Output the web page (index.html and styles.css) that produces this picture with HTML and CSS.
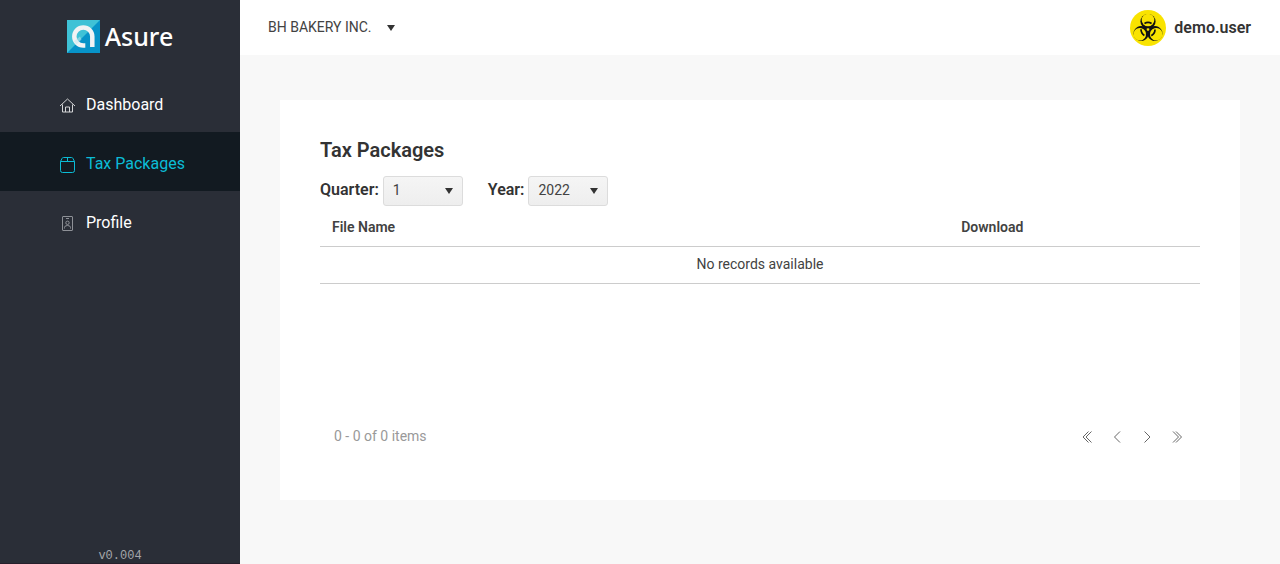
FILE: index.html
```html
<!DOCTYPE html>
<html lang="en">
<head>
<meta charset="utf-8">
<title>Tax Packages</title>
<link rel="stylesheet" href="styles.css">
</head>
<body>
<div class="app">
  <aside class="sidebar">
    <a class="brand" href="#">
      <svg class="brand-mark" viewBox="0 0 33 33" aria-hidden="true">
        <path fill="#0793c8" d="M0 0h33v33H0z"/>
        <path fill="#3fc2d6" d="M0 0h33L0 33z"/>
        <path fill="none" stroke="#f1f3f4" stroke-width="4.500" d="M25.300 27V16.500a9 9 0 1 0-9 9h2"/>
        <path fill="#c5e7ef" d="M7 21l6-4.500 1.500 3-5 5z" opacity=".5"/>
      </svg>
      <span>Asure</span>
    </a>
    <nav class="menu">
      <a class="menu-item" href="#">
        <svg class="icon light" viewBox="0 0 16 16" aria-hidden="true"><path d="M0 8l7.500-7L15 8M2.500 6.500V14h10V6.500M5.500 14V9h4v5"/></svg>
        Dashboard
      </a>
      <a class="menu-item active" href="#" aria-current="page">
        <svg class="icon" viewBox="0 0 16 16" aria-hidden="true"><path d="M.5 4.500h14v9q0 2-2 2h-10q-2 0-2-2zL2 1.500q.4-1 1.500-1h8q1.100 0 1.500 1l1.500 3M7.500.5v4"/></svg>
        Tax Packages
      </a>
      <a class="menu-item" href="#">
        <svg class="icon muted" viewBox="0 0 16 16" aria-hidden="true"><path d="M3 .5h9q.5 0 .5.500v13q0 .5-.5.500H3q-.5 0-.5-.500V1q0-.5.500-.500zM6 2.500h3M4.500 12.500v-1q0-2 3-2t3 2v1"/><circle cx="7.500" cy="6.800" r="1.700"/></svg>
        Profile
      </a>
    </nav>
    <div class="version">v0.004</div>
  </aside>
  <div class="content">
    <header class="topbar">
      <button class="company" type="button">BH BAKERY INC.
        <svg class="caret" viewBox="0 0 8 6" aria-hidden="true"><path d="M0 0h8L4 6z"/></svg>
      </button>
      <a class="user" href="#">
        <svg class="avatar" viewBox="0 0 36 36" aria-hidden="true">
          <defs>
            <mask id="blades" maskUnits="userSpaceOnUse" x="0" y="0" width="36" height="36">
              <g fill="#fff">
                <circle cx="18" cy="11.500" r="7.600"/>
                <circle cx="18" cy="11.500" r="7.600" transform="rotate(120 18 19.500)"/>
                <circle cx="18" cy="11.500" r="7.600" transform="rotate(240 18 19.500)"/>
              </g>
              <circle cx="18" cy="10" r="6.300"/>
              <circle cx="18" cy="10" r="6.300" transform="rotate(120 18 19.500)"/>
              <circle cx="18" cy="10" r="6.300" transform="rotate(240 18 19.500)"/>
              <circle cx="18" cy="19.500" r="1.300"/>
            </mask>
          </defs>
          <circle cx="18" cy="18" r="18" fill="#f9e300"/>
          <path fill="#111" mask="url(#blades)" d="M0 0h36v36H0z"/>
          <circle cx="18" cy="19.500" r="7" fill="none" stroke="#111" stroke-width="1.700" stroke-dasharray="7.400 7.260" transform="rotate(-120.300 18 19.500)"/>
        </svg>
        demo.user
      </a>
    </header>
    <main class="main">
      <section class="card">
        <h1>Tax Packages</h1>
        <div class="filters">
          <div class="field">
            <label for="quarter">Quarter:</label>
            <span class="picker">
              <select id="quarter"><option>1</option><option>2</option><option>3</option><option>4</option></select>
              <svg class="caret" viewBox="0 0 8 6" aria-hidden="true"><path d="M0 0h8L4 6z"/></svg>
            </span>
          </div>
          <div class="field">
            <label for="year">Year:</label>
            <span class="picker">
              <select id="year"><option>2022</option><option>2021</option></select>
              <svg class="caret" viewBox="0 0 8 6" aria-hidden="true"><path d="M0 0h8L4 6z"/></svg>
            </span>
          </div>
        </div>
        <div class="grid">
          <table>
            <thead><tr><th class="name">File Name</th><th>Download</th></tr></thead>
            <tbody><tr><td colspan="2">No records available</td></tr></tbody>
          </table>
        </div>
        <footer class="pager">
          <span>0 - 0 of 0 items</span>
          <div class="pages">
            <button type="button" aria-label="First page"><svg viewBox="0 0 12 12"><path d="M7.500.5L2 6l5.500 5.500M10.500.5L5 6l5.500 5.500"/></svg></button>
            <button type="button" aria-label="Previous page"><svg viewBox="0 0 12 12"><path d="M9 .5L3.500 6 9 11.500"/></svg></button>
            <button type="button" aria-label="Next page"><svg viewBox="0 0 12 12"><path d="M3.500.5L9 6l-5.500 5.500"/></svg></button>
            <button type="button" aria-label="Last page"><svg viewBox="0 0 12 12"><path d="M5 .5L10.500 6 5 11.500M2 .5L7.500 6 2 11.500"/></svg></button>
          </div>
        </footer>
      </section>
    </main>
  </div>
</div>
</body>
</html>
```
FILE: styles.css
```css
* { box-sizing: border-box; }

body {
  margin: 0;
  font: 14px/20px Roboto, "Liberation Sans", sans-serif;
  color: #333;
  background: #f8f8f8;
}

a { color: inherit; text-decoration: none; }

button { padding: 0; border: 0; background: none; font: inherit; color: inherit; }

.app { display: flex; min-height: 100vh; }

.sidebar {
  display: flex;
  flex-direction: column;
  flex: 0 0 240px;
  background: #2a2e37;
  border-bottom: 1px solid #261f2b;
  color: #fff;
}

.brand {
  display: flex;
  align-items: center;
  justify-content: center;
  gap: 5px;
  height: 72px;
  margin-bottom: 1px;
  font: 500 25px/33px "Noto Sans", sans-serif;
}

.brand-mark { width: 33px; height: 33px; }

.menu-item {
  display: flex;
  align-items: center;
  gap: 10px;
  height: 59px;
  padding: 4px 0 0 60px;
  font-size: 16px;
}

.menu-item.active { background: #121a21; color: #0bbcd6; }

.icon {
  width: 16px;
  height: 16px;
  margin-top: 2px;
  fill: none;
  stroke: currentColor;
}

.light { color: #d4d5d7; }

.muted { color: #8e9197; }

.version {
  margin-top: auto;
  text-align: center;
  font: 12px/14px "Liberation Mono", monospace;
  color: #a4a6aa;
}

.content { flex: 1; min-width: 0; }

.topbar {
  display: flex;
  align-items: center;
  justify-content: space-between;
  height: 55px;
  padding: 0 29px 0 28px;
  background: #fff;
}

.company { display: flex; align-items: center; gap: 15px; padding-bottom: 1px; color: #424242; }

.caret { width: 8px; height: 6px; margin-top: 1px; fill: #333; }

.user { display: flex; align-items: center; gap: 8px; font-size: 16px; font-weight: 600; }

.avatar { width: 36px; height: 36px; }

.main { padding: 45px 40px; }

.card { min-height: 400px; padding: 40px 40px 34px; background: #fff; }

h1 { margin: 0; font-size: 20px; line-height: 20px; font-weight: 600; }

.filters { display: flex; gap: 25px; margin-top: 16px; }

.field { display: flex; align-items: center; gap: 4px; }

.field label { padding-bottom: 3px; font-size: 16px; font-weight: 600; }

.picker { display: grid; align-items: center; width: 80px; }

.picker select {
  grid-area: 1 / 1;
  appearance: none;
  width: 100%;
  height: 30px;
  padding: 0 9px 2px;
  border: 1px solid #dcdcdc;
  border-radius: 3px;
  background: linear-gradient(#f5f5f5, #eee);
  font: inherit;
  color: #424242;
}

.picker .caret { grid-area: 1 / 1; justify-self: end; margin: 0 10px 0 0; pointer-events: none; }

.grid { min-height: 200px; }

table { width: 100%; border-collapse: separate; border-spacing: 0; color: #424242; }

th, td { height: 37px; padding: 0 12px 2px; border-bottom: 1px solid #ccc; }

th { height: 41px; padding: 2px 12px 0; text-align: left; font-weight: 600; }

.name { width: 71.5%; }

td { text-align: center; }

.pager {
  display: flex;
  align-items: center;
  justify-content: space-between;
  height: 60px;
  padding: 0 8px 0 14px;
  color: #999;
}

.pages { display: flex; }

.pages button { display: grid; place-items: center; width: 30px; height: 30px; padding-top: 2px; }

.pages svg { width: 12px; height: 12px; fill: none; stroke: #666; }
```
